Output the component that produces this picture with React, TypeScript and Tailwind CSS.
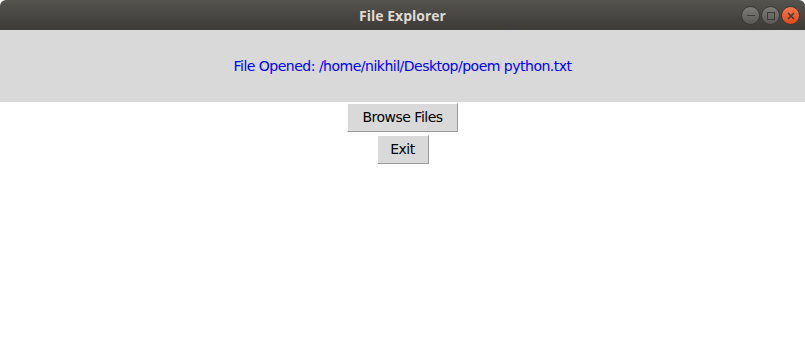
import React from "react";

export default function App() {
  return (
    <div className="w-[805px] h-[343px] bg-white flex flex-col overflow-hidden" style={{ fontFamily: '"DejaVu Sans", sans-serif' }}>
      {/* Title bar */}
      <div className="h-[30px] shrink-0 relative flex items-center justify-center bg-gradient-to-b from-[#55534e] to-[#3c3b37] rounded-t-[6px]">
        <span className="text-[14px] font-bold text-[#dfdbd2]" style={{ fontFamily: '"Open Sans", sans-serif' }}>File Explorer</span>
        <div className="absolute right-[5px] top-[6px] flex gap-[1px]">
          <div className="w-[19px] h-[19px] rounded-full bg-gradient-to-b from-[#7d7c78] to-[#5a5955] border border-[#3a3935] flex items-center justify-center">
            <div className="w-[8px] h-[1.5px] bg-[#3c3b37]" />
          </div>
          <div className="w-[19px] h-[19px] rounded-full bg-gradient-to-b from-[#7d7c78] to-[#5a5955] border border-[#3a3935] flex items-center justify-center">
            <div className="w-[8px] h-[8px] border-[1.5px] border-[#3c3b37]" />
          </div>
          <div className="w-[19px] h-[19px] rounded-full bg-gradient-to-b from-[#f47a4a] to-[#e0461a] border border-[#3a3935] flex items-center justify-center">
            <svg width="8" height="8" viewBox="0 0 8 8"><path d="M1 1L7 7M7 1L1 7" stroke="#3c3b37" strokeWidth="1.5" /></svg>
          </div>
        </div>
      </div>
      {/* Label */}
      <div className="h-[72px] shrink-0 bg-[#d9d9d9] flex items-center justify-center">
        <span className="text-[14px] tracking-[-0.5px] text-[#0000ff] leading-none">File Opened: /home/nikhil/Desktop/poem python.txt</span>
      </div>
      {/* Buttons */}
      <div className="flex flex-col items-center">
        <div className="p-[1px]">
          <button className="h-[29px] w-[111px] bg-[#d9d9d9] text-[14px] tracking-[-0.5px] text-black border border-t-white border-l-white border-b-[#9a9a9a] border-r-[#9a9a9a] flex items-center justify-center">Browse Files</button>
        </div>
        <div className="p-[1px] mt-[1px]">
          <button className="h-[29px] w-[52px] bg-[#d9d9d9] text-[14px] tracking-[-0.5px] text-black border border-t-white border-l-white border-b-[#9a9a9a] border-r-[#9a9a9a] flex items-center justify-center">Exit</button>
        </div>
      </div>
    </div>
  );
}
